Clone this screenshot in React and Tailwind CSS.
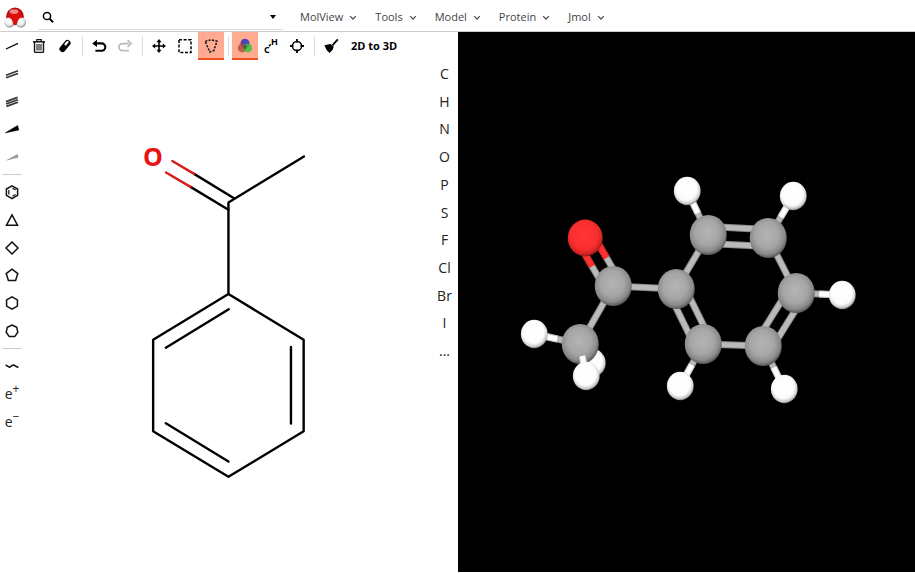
import React, { useState } from "react";

const menus = ["MolView", "Tools", "Model", "Protein", "Jmol"];
const elements = ["C", "H", "N", "O", "P", "S", "F", "Cl", "Br", "I", "..."];

const icons = {
  single: <path d="M2 11 14 5.4" stroke="#000" strokeWidth="1.2" />,
  double: <path d="M2 9.2 14 4.8M2 11.8 14 7.4" stroke="#333" strokeWidth="1.6" />,
  triple: <path d="M2 8.6 13.6 4.4M2 11 14 6.8M2.4 13.4 14 9.2" stroke="#333" strokeWidth="1.7" />,
  wedge: <path d="M1.4 11.8 13.6 4.6 14.8 9z" fill="#000" stroke="#000" strokeWidth=".6" />,
  hash: <path d="M1.4 11.8 13.5 5 14.5 8.6z" fill="#999" />,
  benzene: (
    <g fill="none" stroke="#111">
      <path d="M8 1.8 13.6 5v6.4L8 14.6 2.4 11.4V5z" strokeWidth="1.5" />
      <path d="M4.8 6v4.4M8.4 4.2l3.2 1.8M8.4 12.2l3.2-1.8" strokeWidth="1.2" />
    </g>
  ),
  triangle: <path d="M8 2.8 13.5 13.2H2.5z" fill="none" stroke="#111" strokeWidth="1.5" />,
  square: <path d="M8 2 14 8 8 14 2 8z" fill="none" stroke="#111" strokeWidth="1.5" />,
  pentagon: <path d="M8 2.2 13.8 6.6 11.6 13.4H4.4L2.2 6.6z" fill="none" stroke="#111" strokeWidth="1.5" />,
  hexagon: <path d="M8 1.8 13.4 4.9v6.2L8 14.2 2.6 11.1V4.9z" fill="none" stroke="#111" strokeWidth="1.5" />,
  heptagon: (
    <path d="M8 2 12.7 4.2 13.8 9.3 10.7 13.6H5.3L2.2 9.3 3.3 4.2z" fill="none" stroke="#111" strokeWidth="1.5" />
  ),
  chain: <path d="M1.6 7 4 8.4 5.6 9.4 8.6 7.2 10 7 12.4 8.6 14.4 9.4" fill="none" stroke="#111" strokeWidth="1.6" />,
  trash: (
    <g fill="none" stroke="#111">
      <path d="M2 3.8h12" strokeWidth="1.5" />
      <path d="M5.8 3.5V1.6h4.4v1.9" strokeWidth="1.2" />
      <path d="M3.5 4v9.4q0 1 1 1h7q1 0 1-1V4" strokeWidth="1.4" />
      <path d="M6 6v6.5M8 6v6.5M10 6v6.5" strokeWidth="1.1" />
    </g>
  ),
  eraser: (
    <g transform="rotate(-50 8 8)">
      <rect x="1.2" y="5" width="13.6" height="6" rx="2.6" fill="#000" />
      <path d="M8.8 6.2h3.6q1.4 0 1.4 2.2h-5z" fill="#fff" />
    </g>
  ),
  undo: (
    <g>
      <path d="M4 5.4h6.6a3.4 3.4 0 0 1 0 7.4H4.4" fill="none" stroke="#000" strokeWidth="2.1" />
      <path d="M1.2 5.4 6 1.8V9z" fill="#000" />
    </g>
  ),
  redo: (
    <g>
      <path d="M12 5.6H5.4a3.3 3.3 0 0 0 0 7h6.4" fill="none" stroke="#bbb" strokeWidth="1.7" />
      <path d="M10.6 2.2 14.2 5.6 10.6 9" fill="none" stroke="#bbb" strokeWidth="1.7" />
    </g>
  ),
  move: (
    <g>
      <path d="M8 3v10M3 8h10" stroke="#000" strokeWidth="1.6" />
      <path d="M8 1 10.6 4.2H5.4zM8 15 10.6 11.8H5.4zM1 8 4.2 5.4v5.2zM15 8 11.8 5.4v5.2z" fill="#000" />
    </g>
  ),
  rect: (
    <rect x="2" y="1.8" width="12" height="12.6" fill="none" stroke="#000" strokeWidth="1.5" strokeDasharray="3 1.6" />
  ),
  lasso: (
    <path d="M2.2 3.4 8 1.8 14 3.2 10.8 12.6 6.8 14z" fill="none" stroke="#111" strokeWidth="1.5" strokeDasharray="2.2 1.3" />
  ),
  colors: (
    <g>
      <circle cx="8" cy="5.2" r="4.5" fill="#4f45b8" />
      <circle cx="5.2" cy="10" r="4.4" fill="#b5453c" fillOpacity=".8" />
      <circle cx="10.8" cy="10" r="4.4" fill="#2fc437" fillOpacity=".8" />
      <path d="M8 6.4 9.6 9 8 12 6.4 9z" fill="#333" fillOpacity=".6" />
    </g>
  ),
  target: (
    <g fill="none" stroke="#000">
      <circle cx="8" cy="8" r="4.6" strokeWidth="1.5" />
      <path d="M8 1v3.4M8 11.6V15M1 8h3.4M11.6 8H15" strokeWidth="1.8" />
    </g>
  ),
  broom: (
    <g>
      <path d="M14.8 1.4 9.4 7.4" stroke="#000" strokeWidth="1.8" />
      <path d="M1.4 7.2 7.4 6 10.8 8.8Q10 12.6 6.6 15 3 12.4 1.4 7.2z" fill="#000" />
    </g>
  ),
};

function Icon({ name }) {
  return (
    <svg viewBox="0 0 16 16" className="size-4" aria-hidden="true">
      {icons[name]}
    </svg>
  );
}

function SideButton({ label, children }) {
  return (
    <button aria-label={label} className="flex w-full flex-1 items-center justify-center">
      {children}
    </button>
  );
}

function ToolButton({ label, active, onClick, children }) {
  return (
    <button
      aria-label={label}
      onClick={onClick}
      className={`flex h-7 w-[26px] items-center justify-center border-b-2 pt-0.5 ${
        active ? "border-[#f4511e] bg-[#ffab91]" : "border-transparent"
      }`}
    >
      {children}
    </button>
  );
}

function Separator() {
  return <div className="mr-[3px] ml-1 h-5 w-px bg-[#ddd]" />;
}

function Chevron() {
  return (
    <svg viewBox="0 0 8 6" className="h-[6px] w-2" aria-hidden="true">
      <path d="M1.2 1.2 4 4.2 6.8 1.2" fill="none" stroke="#444" strokeWidth="1.2" />
    </svg>
  );
}

function Logo() {
  return (
    <svg viewBox="0 0 22 22" className="size-[22px]" role="img" aria-label="MolView">
      <defs>
        <radialGradient id="logo-o" cx=".5" cy=".5" r=".55">
          <stop offset="0" stopColor="#f01818" />
          <stop offset=".6" stopColor="#dd1010" />
          <stop offset="1" stopColor="#a00000" />
        </radialGradient>
        <radialGradient id="logo-h" cx=".45" cy=".4" r=".6">
          <stop offset="0" stopColor="#fff" />
          <stop offset=".6" stopColor="#eee" />
          <stop offset="1" stopColor="#888" />
        </radialGradient>
      </defs>
      <circle cx="11" cy="9.4" r="8.8" fill="url(#logo-o)" />
      <circle cx="5.6" cy="15.4" r="5.2" fill="url(#logo-h)" />
      <circle cx="16.8" cy="15.4" r="5.2" fill="url(#logo-h)" />
      <path d="M4 10.6Q8 10.4 9.4 17.6 11 18.6 12.8 17.6 14 10.4 18.4 10.6L15 6H7z" fill="#dd1010" />
      <ellipse cx="10" cy="4.6" rx="4.4" ry="2.4" fill="#fff" fillOpacity=".5" />
    </svg>
  );
}

/* Structural formula */
function Sketch() {
  return (
    <svg viewBox="26 60 404 512" className="h-full w-full" role="img" aria-label="Structural formula">
      <g fill="none" stroke="#000" strokeWidth="2.4" strokeLinecap="round" strokeLinejoin="round">
        <path d="M194.3 173.7 234.7 198.3M190.7 186.7 228.7 209.7" />
        <path d="M304.3 156.3 228.7 202.3V294" />
        <path d="M228.7 294 304 339.7V431.3L228.7 477 153.3 431.3V339.7z" />
        <path d="M229 309.3 166 347.7M291.3 347v76.7M166 423.3l62.7 38.4" />
        <path d="M172.5 160.8 194.3 173.7M166.2 172.4 190.7 186.7" stroke="#d81a1a" />
      </g>
      <text x="153" y="166" textAnchor="middle" fontSize="25" fontWeight="700" fill="#e81212">
        O
      </text>
    </svg>
  );
}

const atoms = {
  O: { x: 585, y: 238, type: "o" },
  C1: { x: 613, y: 286, type: "c" },
  C2: { x: 580, y: 344, type: "c" },
  C3: { x: 676, y: 289, type: "c" },
  C4: { x: 708, y: 235, type: "c" },
  C5: { x: 768, y: 238, type: "c" },
  C6: { x: 796, y: 293, type: "c" },
  C7: { x: 763, y: 346, type: "c" },
  C8: { x: 703, y: 344, type: "c" },
  H1: { x: 534, y: 334, type: "h" },
  H4: { x: 687, y: 191, type: "h" },
  H5: { x: 793, y: 196, type: "h" },
  H6: { x: 842, y: 295, type: "h" },
  H7: { x: 784, y: 389, type: "h" },
  H8: { x: 680, y: 386, type: "h" },
  Hb: { x: 592, y: 363, type: "h" },
};

const bonds = [
  ["C1", "O", 2],
  ["C1", "C2", 1],
  ["C1", "C3", 1],
  ["C3", "C4", 1],
  ["C4", "C5", 2],
  ["C5", "C6", 1],
  ["C6", "C7", 2],
  ["C7", "C8", 1],
  ["C8", "C3", 2],
  ["C2", "H1", 1],
  ["C4", "H4", 1],
  ["C5", "H5", 1],
  ["C6", "H6", 1],
  ["C7", "H7", 1],
  ["C8", "H8", 1],
];

const radius = { c: [18.5, 20], o: [17.5, 18.5], h: [13.4, 14.2] };
const edge = { c: "#8a8a8a", o: "#d02020", h: "#c4c4c4" };
const core = { c: "#bababa", o: "#ff3030", h: "#ffffff" };

function Atom({ x, y, type }) {
  return <ellipse cx={x} cy={y} rx={radius[type][0]} ry={radius[type][1]} fill={`url(#atom-${type})`} />;
}

function Stick({ x1, y1, x2, y2, type }) {
  return (
    <g>
      <line x1={x1} y1={y1} x2={x2} y2={y2} stroke={edge[type]} strokeWidth="7" />
      <line x1={x1} y1={y1} x2={x2} y2={y2} stroke={core[type]} strokeWidth="5" />
    </g>
  );
}

function Bond({ from, to, order }) {
  const a = atoms[from];
  const b = atoms[to];
  const length = Math.hypot(b.x - a.x, b.y - a.y);
  const nx = -(b.y - a.y) / length;
  const ny = (b.x - a.x) / length;
  const offsets = order === 2 ? [-8.4, 8.4] : [0];

  return offsets.map((o) => {
    const x1 = a.x + nx * o;
    const y1 = a.y + ny * o;
    const x2 = b.x + nx * o;
    const y2 = b.y + ny * o;
    const mx = (x1 + x2) / 2;
    const my = (y1 + y2) / 2;
    return (
      <g key={o}>
        <Stick x1={x1} y1={y1} x2={x2} y2={y2} type={a.type} />
        {a.type !== b.type && <Stick x1={mx} y1={my} x2={x2} y2={y2} type={b.type} />}
      </g>
    );
  });
}

/* Ball and stick model */
function Model() {
  return (
    <svg viewBox="458 32 457 540" className="h-full w-full" role="img" aria-label="3D model">
      <defs>
        <radialGradient id="atom-c" cx=".47" cy=".43" r=".58">
          <stop offset="0" stopColor="#b4b4b4" />
          <stop offset=".55" stopColor="#a6a6a6" />
          <stop offset=".82" stopColor="#8a8a8a" />
          <stop offset="1" stopColor="#505050" />
        </radialGradient>
        <radialGradient id="atom-o" cx=".47" cy=".43" r=".58">
          <stop offset="0" stopColor="#ff3434" />
          <stop offset=".65" stopColor="#fa2e2e" />
          <stop offset=".87" stopColor="#d02424" />
          <stop offset="1" stopColor="#7a1212" />
        </radialGradient>
        <radialGradient id="atom-h" cx=".47" cy=".43" r=".58">
          <stop offset="0" stopColor="#fff" />
          <stop offset=".68" stopColor="#fcfcfc" />
          <stop offset=".87" stopColor="#d0d0d0" />
          <stop offset="1" stopColor="#777" />
        </radialGradient>
      </defs>
      {bonds.map(([from, to, order]) => (
        <Bond key={from + to} from={from} to={to} order={order} />
      ))}
      <Atom {...atoms.Hb} />
      {Object.keys(atoms)
        .filter((id) => id !== "Hb")
        .map((id) => (
          <Atom key={id} {...atoms[id]} />
        ))}
      <Stick x1={582} y1={356} x2={584} y2={366} type="h" />
      <Atom x={586} y={376} type="h" />
    </svg>
  );
}

function App() {
  const [query, setQuery] = useState("");
  const [selection, setSelection] = useState("lasso");
  const [colored, setColored] = useState(true);

  return (
    <div className="flex h-screen flex-col bg-white pb-px font-['Open_Sans','Noto_Sans',sans-serif] text-[11px] text-[#444]">
      {/* Header */}
      <header className="flex h-8 shrink-0 items-center border-b border-[#ccc] pl-1">
        <a href="#" className="mt-1">
          <Logo />
        </a>
        <div className="mt-1 ml-3 flex h-[25px] w-[245px] items-center border-b border-[#ddd] pr-0.5 pl-1">
          <svg viewBox="0 0 12 12" className="size-3 shrink-0" aria-hidden="true">
            <circle cx="5" cy="5" r="3.6" fill="none" stroke="#000" strokeWidth="1.5" />
            <path d="M7.6 7.6 11 11.2" stroke="#000" strokeWidth="2" />
          </svg>
          <input
            type="text"
            aria-label="Search"
            value={query}
            onChange={(e) => setQuery(e.target.value)}
            className="min-w-0 flex-1 px-2 outline-none"
          />
          <button aria-label="Search options" className="flex size-4 items-center justify-center">
            <svg viewBox="0 0 6 4" className="h-1 w-[6px]" aria-hidden="true">
              <path d="M0 0h6L3 4z" fill="#000" />
            </svg>
          </button>
        </div>
        <nav className="ml-[17px] flex items-center gap-[18px] pt-1">
          {menus.map((menu) => (
            <button key={menu} className="flex items-center gap-1.5">
              {menu}
              <Chevron />
            </button>
          ))}
        </nav>
      </header>

      <main className="flex min-h-0 flex-1">
        {/* Sketcher */}
        <section className="flex w-1/2">
          <div className="mr-0.5 flex w-6 shrink-0 flex-col items-center">
            <div className="flex h-[139px] w-full flex-col">
              {["single", "double", "triple", "wedge", "hash"].map((name) => (
                <SideButton key={name} label={name}>
                  <Icon name={name} />
                </SideButton>
              ))}
            </div>
            <div className="my-[3px] h-px w-5 bg-[#ccc]" />
            <div className="flex h-[167px] w-full flex-col">
              {["benzene", "triangle", "square", "pentagon", "hexagon", "heptagon"].map((name) => (
                <SideButton key={name} label={name}>
                  <Icon name={name} />
                </SideButton>
              ))}
            </div>
            <div className="my-[3px] h-px w-5 bg-[#ccc]" />
            <div className="flex h-[84px] w-full flex-col text-sm text-[#222]">
              <SideButton label="chain">
                <Icon name="chain" />
              </SideButton>
              <SideButton label="Increase charge">
                <span>
                  e<sup className="text-xs">+</sup>
                </span>
              </SideButton>
              <SideButton label="Decrease charge">
                <span>
                  e<sup className="text-xs">−</sup>
                </span>
              </SideButton>
            </div>
          </div>

          <div className="flex min-w-0 flex-1 flex-col">
            <div className="flex h-7 shrink-0 items-center">
              <ToolButton label="Clear all">
                <Icon name="trash" />
              </ToolButton>
              <ToolButton label="Erase">
                <Icon name="eraser" />
              </ToolButton>
              <Separator />
              <ToolButton label="Undo">
                <Icon name="undo" />
              </ToolButton>
              <ToolButton label="Redo">
                <Icon name="redo" />
              </ToolButton>
              <Separator />
              <ToolButton label="Move">
                <Icon name="move" />
              </ToolButton>
              <ToolButton label="Rectangle selection" active={selection === "rect"} onClick={() => setSelection("rect")}>
                <Icon name="rect" />
              </ToolButton>
              <ToolButton label="Lasso selection" active={selection === "lasso"} onClick={() => setSelection("lasso")}>
                <Icon name="lasso" />
              </ToolButton>
              <Separator />
              <ToolButton label="Color mode" active={colored} onClick={() => setColored(!colored)}>
                <Icon name="colors" />
              </ToolButton>
              <ToolButton label="Full structural formula">
                <svg viewBox="0 0 16 16" className="size-4 overflow-visible" fill="#000" aria-hidden="true">
                  <text x="1" y="15" fontSize="9" fontWeight="700">C</text>
                  <text x="8" y="7" fontSize="9" fontWeight="700">H</text>
                  <path d="M6 8.2 7.8 6.2" stroke="#000" strokeWidth="1.4" />
                </svg>
              </ToolButton>
              <ToolButton label="Center">
                <Icon name="target" />
              </ToolButton>
              <Separator />
              <ToolButton label="Clean">
                <Icon name="broom" />
              </ToolButton>
              <button className="ml-[7px] font-bold whitespace-nowrap text-black">2D to 3D</button>
            </div>

            <div className="flex min-h-0 flex-1">
              <div className="min-w-0 flex-1">
                <Sketch />
              </div>
              <div className="flex h-[305px] w-7 flex-col pl-0.5 text-sm text-[#222]">
                {elements.map((element) => (
                  <button key={element} className="flex-1">
                    {element}
                  </button>
                ))}
              </div>
            </div>
          </div>
        </section>

        {/* 3D viewer */}
        <section className="min-w-0 flex-1 bg-black">
          <Model />
        </section>
      </main>
    </div>
  );
}

export default App;
